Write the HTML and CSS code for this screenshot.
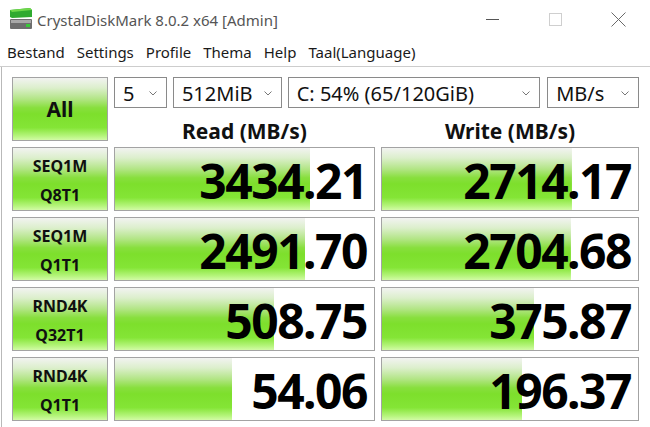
FILE: index.html
```html
<!DOCTYPE html>
<html>
<head>
<meta charset="utf-8">
<title>CrystalDiskMark</title>
<link rel="stylesheet" href="styles.css">
</head>
<body>
<div class="window">
  <header class="titlebar">
    <svg class="app-icon" viewBox="0 0 22 21" width="22" height="21">
      <polygon points="0,2 20,0 22,2 22,9 2,10 0,9" fill="#2faa2f"/>
      <polygon points="0,2 20,0 22,2 2,4" fill="#6fd84a"/>
      <rect x="0" y="11" width="22" height="10" rx="1" fill="#6e6e6e"/>
      <rect x="1" y="12" width="20" height="3" fill="#a8a8a8"/>
      <rect x="16" y="16" width="4" height="3" fill="#38c838"/>
    </svg>
    <span class="title">CrystalDiskMark 8.0.2 x64 [Admin]</span>
    <div class="caption">
      <span class="cbtn"><svg width="13" height="13" viewBox="0 0 13 13"><line x1="0" y1="6.5" x2="13" y2="6.5" stroke="#555" stroke-width="1"/></svg></span>
      <span class="cbtn"><svg width="13" height="13" viewBox="0 0 13 13"><rect x="0.5" y="0.5" width="12" height="12" fill="none" stroke="#cfcfcf" stroke-width="1"/></svg></span>
      <span class="cbtn"><svg width="15" height="15" viewBox="0 0 15 15"><path d="M0.5 0.5 L14.5 14.5 M14.5 0.5 L0.5 14.5" stroke="#6a6a6a" stroke-width="1"/></svg></span>
    </div>
  </header>
  <nav class="menubar">
    <span>Bestand</span><span>Settings</span><span>Profile</span><span>Thema</span><span>Help</span><span>Taal(Language)</span>
  </nav>
  <main class="client">
    <div class="grid">
      <div class="btn all">All</div>
      <div class="selects">
        <div class="select s-count"><span>5</span><svg class="chev" width="8" height="5" viewBox="0 0 8 5"><polyline points="0.5,0.5 4,4 7.5,0.5" fill="none" stroke="#777" stroke-width="1"/></svg></div>
        <div class="select s-size"><span>512MiB</span><svg class="chev" width="8" height="5" viewBox="0 0 8 5"><polyline points="0.5,0.5 4,4 7.5,0.5" fill="none" stroke="#777" stroke-width="1"/></svg></div>
        <div class="select s-drive"><span>C: 54% (65/120GiB)</span><svg class="chev" width="8" height="5" viewBox="0 0 8 5"><polyline points="0.5,0.5 4,4 7.5,0.5" fill="none" stroke="#777" stroke-width="1"/></svg></div>
        <div class="select s-unit"><span>MB/s</span><svg class="chev" width="8" height="5" viewBox="0 0 8 5"><polyline points="0.5,0.5 4,4 7.5,0.5" fill="none" stroke="#777" stroke-width="1"/></svg></div>
      </div>
      <div class="head">Read (MB/s)</div>
      <div class="head">Write (MB/s)</div>

      <div class="btn label"><span>SEQ1M</span><span>Q8T1</span></div>
      <div class="result" style="--p:75.3%"><span>3434.21</span></div>
      <div class="result" style="--p:74.2%"><span>2714.17</span></div>

      <div class="btn label"><span>SEQ1M</span><span>Q1T1</span></div>
      <div class="result" style="--p:73.4%"><span>2491.70</span></div>
      <div class="result" style="--p:73.8%"><span>2704.68</span></div>

      <div class="btn label"><span>RND4K</span><span>Q32T1</span></div>
      <div class="result" style="--p:61.4%"><span>508.75</span></div>
      <div class="result" style="--p:59.4%"><span>375.87</span></div>

      <div class="btn label"><span>RND4K</span><span>Q1T1</span></div>
      <div class="result" style="--p:45.2%"><span>54.06</span></div>
      <div class="result" style="--p:54.7%"><span>196.37</span></div>
    </div>
  </main>
</div>
</body>
</html>
```
FILE: styles.css
```css
html, body {
  margin: 0;
  padding: 0;
  background: #ffffff;
}
body {
  width: 650px;
  height: 427px;
  overflow: hidden;
  font-family: "Noto Sans", "Open Sans", sans-serif;
  color: #111;
}
.window {
  display: flex;
  flex-direction: column;
  height: 427px;
}
.titlebar {
  height: 38px;
  display: flex;
  align-items: center;
  flex: none;
}
.app-icon {
  margin-left: 10px;
  margin-right: 5px;
  margin-top: -2px;
  flex: none;
}
.title {
  font-size: 15px;
  color: #555;
  padding-top: 2px;
}
.caption {
  margin-left: auto;
  display: flex;
  height: 38px;
}
.cbtn {
  width: 63px;
  display: flex;
  align-items: center;
  justify-content: center;
}
.cbtn svg { display: block; }
.menubar {
  height: 28px;
  line-height: 28px;
  display: flex;
  gap: 12px;
  padding-left: 7px;
  font-size: 15px;
  color: #1a1a1a;
  border-bottom: 1px solid #cdcdcd;
  flex: none;
}
.client {
  flex: 1;
  margin-left: 1px;
  border-left: 1px solid #b9b9b9;
  padding: 10px 0 0 10px;
}
.grid {
  display: grid;
  grid-template-columns: 96px 261px 258px;
  grid-template-rows: 31px 27px repeat(4, 64px);
  column-gap: 6px;
  row-gap: 6px;
}
.btn {
  box-sizing: border-box;
  border: 1px solid #a3a3a3;
  background: linear-gradient(180deg, #f2f3f1 0%, #dcefcc 16%, #b2e585 34%, #88df3e 48%, #7ddf2c 58%, #84e536 80%, #b4f47a 93%, #d2fba6 100%);
  display: flex;
  flex-direction: column;
  align-items: center;
  justify-content: center;
  font-weight: 700;
  color: #101010;
}
.all {
  grid-row: 1 / 3;
  font-size: 21px;
}
.label {
  font-size: 16px;
  padding-top: 3px;
}
.label span {
  line-height: 29px;
}
.selects {
  grid-column: 2 / 4;
  display: flex;
  gap: 6px;
}
.select {
  box-sizing: border-box;
  height: 31px;
  border: 1px solid #8a8a8a;
  background: #fff;
  display: flex;
  align-items: center;
  padding: 2px 9px 0 8px;
  font-size: 20px;
  line-height: 27px;
  color: #111;
  white-space: nowrap;
}
.select .chev {
  margin-left: auto;
  display: block;
}
.s-count { width: 53px; }
.s-size { width: 109px; }
.s-drive { width: 253px; margin-right: 1px; }
.s-unit { width: 92px; }
.head {
  align-self: end;
  text-align: center;
  font-weight: 700;
  font-size: 21px;
  line-height: 19px;
  color: #111;
}
.result {
  box-sizing: border-box;
  border: 1px solid #a3a3a3;
  background: linear-gradient(180deg, #f2f3f1 0%, #dcefcc 16%, #b2e585 34%, #88df3e 48%, #7ddf2c 58%, #84e536 80%, #b4f47a 93%, #d2fba6 100%) 0 0 / var(--p) 100% no-repeat, #ffffff;
  display: flex;
  align-items: center;
  justify-content: flex-end;
  padding: 4px 7px 0 0;
  font-weight: 700;
  font-size: 48px;
  letter-spacing: -1.5px;
  line-height: 48px;
  color: #000;
}
```
